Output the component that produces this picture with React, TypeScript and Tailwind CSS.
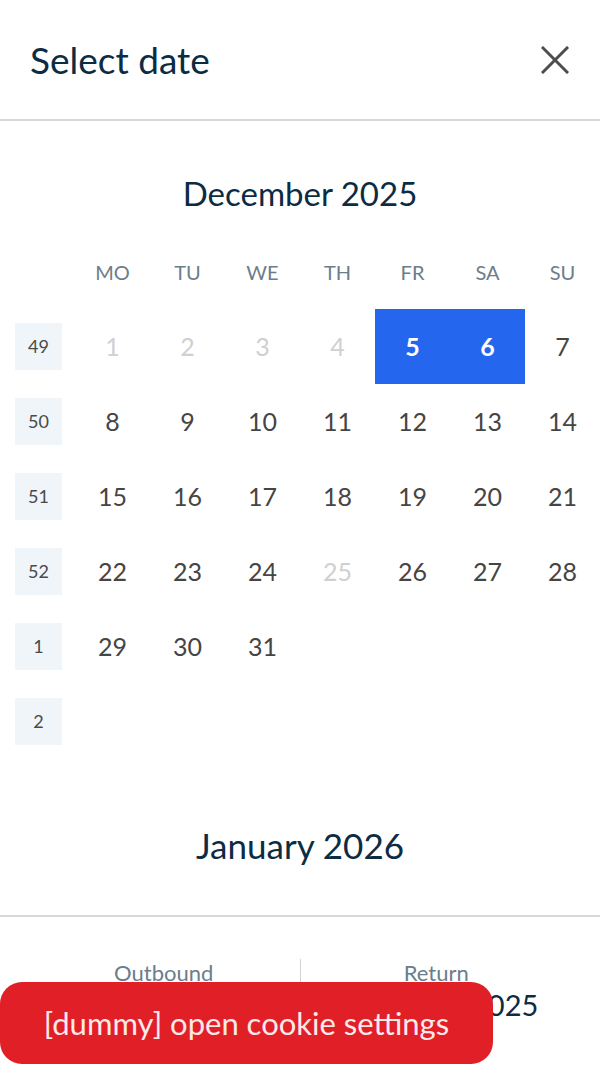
type Day = { n: number; muted?: boolean; sel?: boolean }

const december: { week: number; days: (Day | null)[] }[] = [
  {
    week: 49,
    days: [
      { n: 1, muted: true },
      { n: 2, muted: true },
      { n: 3, muted: true },
      { n: 4, muted: true },
      { n: 5, sel: true },
      { n: 6, sel: true },
      { n: 7 },
    ],
  },
  { week: 50, days: [8, 9, 10, 11, 12, 13, 14].map((n) => ({ n })) },
  { week: 51, days: [15, 16, 17, 18, 19, 20, 21].map((n) => ({ n })) },
  {
    week: 52,
    days: [22, 23, 24, 25, 26, 27, 28].map((n) => ({ n, muted: n === 25 })),
  },
  {
    week: 1,
    days: [{ n: 29 }, { n: 30 }, { n: 31 }, null, null, null, null],
  },
  { week: 2, days: [null, null, null, null, null, null, null] },
]

const weekdays = ["MO", "TU", "WE", "TH", "FR", "SA", "SU"]

export default function App() {
  return (
    <div
      className="relative w-[600px] h-[1065px] overflow-hidden bg-white"
      style={{ fontFamily: "Lato, 'Liberation Sans', sans-serif" }}
    >
      {/* Header */}
      <div className="flex items-center justify-between h-[121px] pl-[30px] pr-[30px] border-b-2 border-[#d6d8db]">
        <h1 className="text-[37px] leading-none text-[#0c2c44]">
          Select date
        </h1>
        <svg
          width="28"
          height="28"
          viewBox="0 0 28 28"
          className="mr-[1px]"
          stroke="#4d4d4d"
          strokeWidth="3"
          strokeLinecap="square"
        >
          <line x1="2" y1="2" x2="26" y2="26" />
          <line x1="26" y1="2" x2="2" y2="26" />
        </svg>
      </div>

      {/* December */}
      <div className="pt-[52px]">
        <h2 className="text-center text-[33px] leading-[40px] text-[#0c2c44]">
          December 2025
        </h2>
        <div className="mt-[21px] grid grid-cols-8">
          <div className="h-[75px]" />
          {weekdays.map((d) => (
            <div
              key={d}
              className="h-[75px] flex items-center justify-center text-[20px] text-[#6b7d8b]"
            >
              {d}
            </div>
          ))}
          {december.map((row) => (
            <>
              <div
                key={`w${row.week}`}
                className="h-[75px] flex items-center justify-center"
              >
                <div className="w-[47px] h-[47px] bg-[#eff5f9] flex items-center justify-center text-[18px] text-[#4a4a4a] ml-[2px]">
                  {row.week}
                </div>
              </div>
              {row.days.map((d, i) => (
                <div
                  key={`${row.week}-${i}`}
                  className={`h-[75px] flex items-center justify-center text-[25px] ${
                    d?.sel
                      ? "bg-[#2467ee] text-white font-bold"
                      : d?.muted
                        ? "text-[#d0d0d0]"
                        : "text-[#454545]"
                  }`}
                >
                  {d?.n}
                </div>
              ))}
            </>
          ))}
        </div>
      </div>

      {/* January */}
      <h2 className="mt-[66px] text-center text-[35px] leading-[40px] text-[#0c2c44]">
        January 2026
      </h2>

      {/* Footer */}
      <div className="absolute left-0 right-0 top-[915px] bottom-0 bg-white border-t-2 border-[#d6d8db]">
        <div className="flex px-[28px] pt-[42px]">
          <div className="flex-1 flex flex-col items-center border-r border-[#cfd3d6]">
            <span className="text-[22px] text-[#6b7d8b] leading-[28px]">
              Outbound
            </span>
            <span className="text-[29px] text-[#0c2c44] leading-[36px]">
              Fri, 5 Dec 2025
            </span>
          </div>
          <div className="flex-1 flex flex-col items-center">
            <span className="text-[22px] text-[#6b7d8b] leading-[28px]">
              Return
            </span>
            <span className="text-[29px] text-[#0c2c44] leading-[36px]">
              Sat, 6 Dec 2025
            </span>
          </div>
        </div>
      </div>

      {/* Cookie button */}
      <button className="absolute left-0 top-[982px] w-[493px] h-[82px] rounded-[22px] bg-[#e11f27] text-[#fde9ea] text-[31px] flex items-center justify-center">
        [dummy] open cookie settings
      </button>
    </div>
  )
}
